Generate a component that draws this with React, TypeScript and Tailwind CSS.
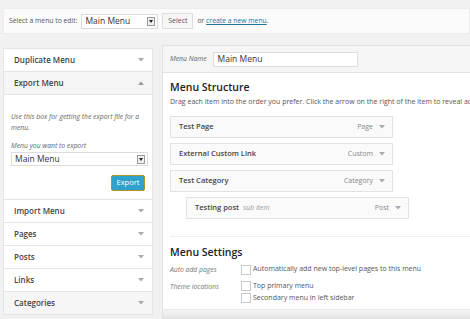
import React from "react";

const Down = ({ up = false }: { up?: boolean }) => (
  <svg width="6" height="4" viewBox="0 0 6 4" className="shrink-0">
    {up ? <path d="M0 4 L3 0.5 L6 4 Z" fill="#999" /> : <path d="M0 0 L3 3.5 L6 0 Z" fill="#aaa" />}
  </svg>
);

const SelectBox = ({ w, h, text, size }: { w: string; h: string; text: string; size: string }) => (
  <div className={`flex items-center justify-between bg-white border border-[#dcdcdc] pl-[3px] pr-[2px] ${w} ${h}`}>
    <span className={`${size} text-[#333]`}>{text}</span>
    <div className="w-[8px] h-[9px] border border-[#999] bg-[#f0f0f0] flex items-center justify-center">
      <svg width="4" height="3" viewBox="0 0 4 3">
        <path d="M0 0 L2 3 L4 0 Z" fill="#222" />
      </svg>
    </div>
  </div>
);

const Row = ({ label, grey = false }: { label: string; grey?: boolean }) => (
  <div className={`h-[23px] flex items-center justify-between pl-[10px] pr-[8px] border-b border-[#e5e5e5] ${grey ? "bg-[#f6f6f6]" : "bg-white"}`}>
    <span className="text-[8px] font-semibold text-[#444]">{label}</span>
    <Down />
  </div>
);

const Item = ({ title, type, sub = false, indent = false }: { title: string; type: string; sub?: boolean; indent?: boolean }) => (
  <div className={`h-[22px] w-[223px] flex items-center justify-between bg-[#fafafa] border border-[#e2e2e2] pl-[8px] pr-[7px] ${indent ? "ml-[16px]" : ""}`}>
    <div className="flex items-baseline gap-[4px]">
      <span className="text-[7.5px] font-semibold text-[#444]">{title}</span>
      {sub && <span className="text-[7px] italic text-[#999]">sub item</span>}
    </div>
    <div className="flex items-center gap-[6px]">
      <span className="text-[7px] text-[#888]">{type}</span>
      <Down />
    </div>
  </div>
);

const Check = () => <div className="w-[10px] h-[10px] border border-[#c8c8c8] bg-white shrink-0" />;

export default function App() {
  return (
    <div className="w-[470px] h-[319px] bg-[#f1f1f1] overflow-hidden relative" style={{ fontFamily: '"Open Sans", sans-serif' }}>
      <div className="mt-[8px] ml-[3px] h-[26px] bg-[#fbfbfb] border border-[#ececec] flex items-center pl-[5px] whitespace-nowrap">
        <span className="text-[6.8px] text-[#555] mr-[4px]">Select a menu to edit:</span>
        <SelectBox w="w-[77px]" h="h-[15px]" text="Main Menu" size="text-[8.5px]" />
        <div className="h-[16px] w-[31px] ml-[4px] flex items-center justify-center border border-[#ddd] bg-[#f7f7f7] text-[7px] text-[#555]">Select</div>
        <span className="text-[6.8px] text-[#555] ml-[4px]">or <span className="text-[#21759b] underline">create a new menu</span>.</span>
      </div>

      <div className="flex items-start">
        <div className="mt-[14px] ml-[3px] w-[150px] bg-white border border-[#e5e5e5] border-b-0 shrink-0">
          <Row label="Duplicate Menu" />
          <div className="h-[23px] flex items-center justify-between pl-[10px] pr-[8px] bg-[#f5f5f5] border-b border-[#e5e5e5]">
            <span className="text-[8px] font-semibold text-[#444]">Export Menu</span>
            <Down up />
          </div>
          <div className="pt-[16px] pl-[7px] pr-[6px] pb-[8px] border-b border-[#e5e5e5]">
            <p className="text-[6.8px] italic text-[#666] leading-[11px]">Use this box for getting the export file for a menu.</p>
            <p className="mt-[8px] text-[6.8px] italic text-[#666] leading-[10px]">Menu you want to export</p>
            <div className="mt-[1px]">
              <SelectBox w="w-[137px]" h="h-[14px]" text="Main Menu" size="text-[8.5px]" />
            </div>
            <div className="flex justify-end mt-[9px] pr-[1px]">
              <div className="w-[34px] h-[16px] bg-[#2ea2cc] border border-[#b8912a] rounded-[2px] flex items-center justify-center text-[7.5px] text-white">Export</div>
            </div>
          </div>
          <Row label="Import Menu" />
          <Row label="Pages" />
          <Row label="Posts" />
          <Row label="Links" />
          <Row label="Categories" grey />
        </div>

        <div className="mt-[11px] ml-[9px] flex-1 min-w-0 bg-white border border-[#e2e2e2] border-r-0 h-[274px] flex flex-col">
          <div className="h-[27px] bg-[#f5f5f5] border-b border-[#e2e2e2] flex items-center pl-[7px] gap-[6px] shrink-0">
            <span className="text-[6.8px] italic text-[#666]">Menu Name</span>
            <div className="w-[145px] h-[15px] bg-white border border-[#ddd] flex items-center pl-[4px] text-[8.5px] text-[#333]">Main Menu</div>
          </div>
          <div className="flex-1 pl-[7px] pt-[6px] whitespace-nowrap overflow-hidden">
            <div className="text-[10.5px] font-semibold text-[#222] leading-[16px]">Menu Structure</div>
            <div className="text-[7px] text-[#555] leading-[12px] mt-[1px]">Drag each item into the order you prefer. Click the arrow on the right of the item to reveal additional configuration options.</div>
            <div className="mt-[8px] flex flex-col gap-[5px]">
              <Item title="Test Page" type="Page" />
              <Item title="External Custom Link" type="Custom" />
              <Item title="Test Category" type="Category" />
              <Item title="Testing post" type="Post" sub indent />
            </div>
            <div className="mt-[17px] border-t border-[#eee]" />
            <div className="text-[10.5px] font-semibold text-[#222] leading-[16px] mt-[7px]">Menu Settings</div>
            <div className="flex mt-[4px]">
              <div className="w-[71px] text-[6.8px] italic text-[#777] pt-[1px]">Auto add pages</div>
              <div className="flex items-center gap-[2px]">
                <Check />
                <span className="text-[7px] text-[#555]">Automatically add new top-level pages to this menu</span>
              </div>
            </div>
            <div className="flex mt-[6px]">
              <div className="w-[71px] text-[6.8px] italic text-[#777] pt-[1px]">Theme locations</div>
              <div className="flex flex-col gap-[1px]">
                <div className="flex items-center gap-[2px]">
                  <Check />
                  <span className="text-[7px] text-[#555]">Top primary menu</span>
                </div>
                <div className="flex items-center gap-[2px]">
                  <Check />
                  <span className="text-[7px] text-[#555]">Secondary menu in left sidebar</span>
                </div>
              </div>
            </div>
          </div>
          <div className="h-[9px] bg-gradient-to-b from-[#f4f4f4] to-[#e6e6e6] border-t border-[#e8e8e8] shrink-0" />
        </div>
      </div>
    </div>
  );
}
